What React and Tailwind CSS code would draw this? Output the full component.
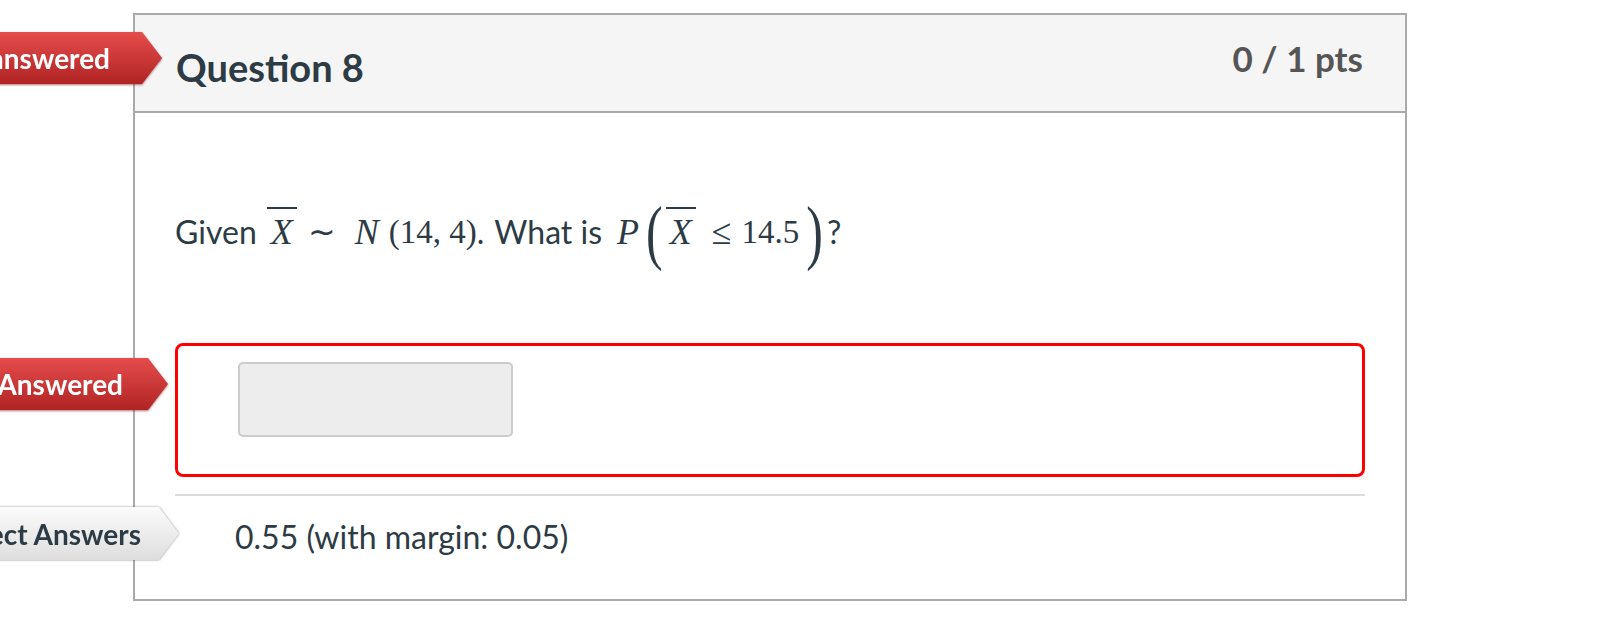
import React from 'react';

const arrow = "[clip-path:polygon(0_0,calc(100%_-_20px)_0,100%_50%,calc(100%_-_20px)_100%,0_100%)]";

function Tag({ label, tone, className, pad }) {
  const red = tone === 'red';
  return (
    <div
      className={`absolute ${className} ${
        red
          ? 'drop-shadow-[0_1px_1px_rgba(120,0,0,0.55)]'
          : 'drop-shadow-[0_0_1px_rgba(0,0,0,0.45)]'
      }`}
    >
      <div
        className={`${arrow} ${pad} flex h-full w-full items-center justify-end whitespace-nowrap text-[28px] font-bold leading-none ${
          red
            ? 'bg-linear-to-b from-[#e64c4c] to-[#b02323] text-white'
            : 'bg-linear-to-b from-[#fbfbfb] to-[#dedede] text-[#2d3b45]'
        }`}
      >
        {label}
      </div>
    </div>
  );
}

// X with an overline, MathJax style
function Bar({ children }) {
  return (
    <span className="flex w-[30px] flex-col items-center border-t-2 border-[#2d3b45] pb-[7px] pt-[5px] text-[36px] italic leading-none">
      {children}
    </span>
  );
}

export default function App() {
  const serif = "font-['Liberation_Serif',serif] text-[33px] leading-none";
  const paren = "font-['Liberation_Serif',serif] text-[50px] leading-none scale-y-[1.42]";

  return (
    <div className="relative min-h-[620px] overflow-hidden bg-white font-['Lato',sans-serif] text-[#2d3b45]">
      <div className="ml-[133px] pt-[13px]">
        <div className="w-[1274px] border-2 border-[#aaaaaa]">
          {/* Header */}
          <div className="flex h-[98px] items-start justify-between border-b-2 border-[#aaaaaa] bg-[#f5f5f5] pl-[41px] pr-[42px]">
            <h2 className="mt-[33px] text-[38px] font-bold leading-none">Question 8</h2>
            <div className="mt-[26px] text-[35px] font-bold leading-none text-[#555555]">0 / 1 pts</div>
          </div>

          {/* Body */}
          <div className="px-[40px]">
            <div className="mt-[79px] flex h-[80px] items-center text-[32px] leading-none">
              <span>Given</span>
              <span className={`${serif} ml-[10px]`}>
                <Bar>X</Bar>
              </span>
              <span className={`${serif} ml-[11px]`}>∼</span>
              <span className={`${serif} ml-[19px] text-[36px] italic`}>N</span>
              <span className={`${serif} ml-[10px]`}>(14, 4)</span>
              <span>.</span>
              <span className="ml-[10px]">What is</span>
              <span className={`${serif} ml-[15px] text-[36px] italic`}>P</span>
              <span className={`${paren} ml-[7px]`}>(</span>
              <span className={`${serif} ml-[3px]`}>
                <Bar>X</Bar>
              </span>
              <span className={`${serif} ml-[16px] text-[36px]`}>≤</span>
              <span className={`${serif} ml-[10px] text-[31px]`}>14.5</span>
              <span className={`${paren} ml-[7px]`}>)</span>
              <span className="ml-[4px]">?</span>
            </div>

            {/* Answer box */}
            <div className="mt-[71px] rounded-[8px] border-[3px] border-[#ff0000] pb-[37px] pl-[60px] pt-[16px]">
              <div className="h-[75px] w-[275px] rounded-[5px] border-2 border-[#cccccc] bg-[#ededed]" />
            </div>

            <div className="mt-[17px] h-[2px] bg-[#dddddd]" />

            <div className="flex h-[76px] items-center pl-[60px] text-[32px] leading-none">
              <span className="translate-y-[3px]">0.55 (with margin: 0.05)</span>
            </div>
            <div className="h-[27px]" />
          </div>
        </div>
      </div>

      <Tag label="Unanswered" tone="red" pad="pr-[52px]" className="left-[-100px] top-[32px] h-[52px] w-[262px]" />
      <Tag label="You Answered" tone="red" pad="pr-[45px]" className="left-[-100px] top-[358px] h-[52px] w-[268px]" />
      <Tag label="Correct Answers" tone="gray" pad="pr-[38px]" className="left-[-100px] top-[507px] h-[53px] w-[279px]" />
    </div>
  );
}
